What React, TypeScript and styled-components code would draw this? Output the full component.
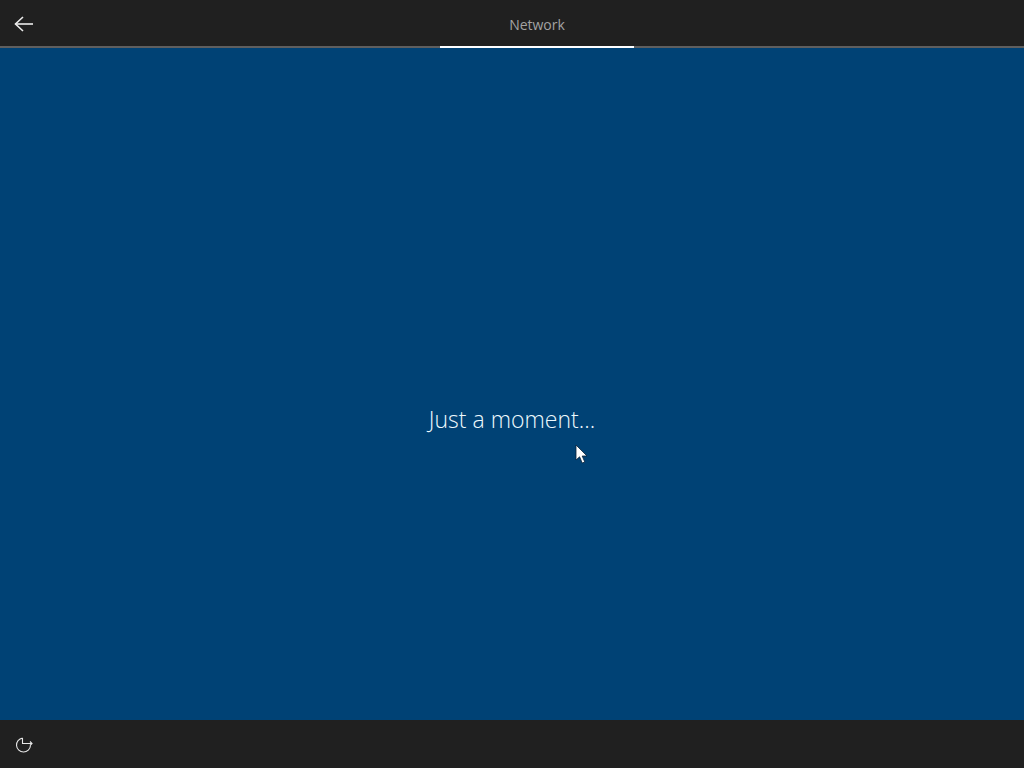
import styled, { createGlobalStyle } from "styled-components";

const GlobalStyle = createGlobalStyle`
  html, body {
    margin: 0;
    height: 100%;
    background: #004275;
  }
  #root {
    height: 100%;
  }
`;

const Screen = styled.div`
  display: flex;
  flex-direction: column;
  font-family: "Open Sans", "Noto Sans", sans-serif;
  height: 768px;
  overflow: hidden;
  width: 1024px;
`;

const TopBar = styled.header`
  background: #202020;
  border-bottom: 2px solid #5f5f5f;
  box-sizing: border-box;
  display: grid;
  flex-shrink: 0;
  grid-template-columns: 440px 194px 1fr;
  height: 48px;
`;

const BackButton = styled.button`
  align-items: center;
  align-self: stretch;
  background: none;
  border: 0;
  display: flex;
  justify-self: start;
  padding: 0 0 0 14px;
`;

const Tab = styled.div`
  align-items: center;
  border-bottom: 2px solid #ffffff;
  box-sizing: border-box;
  color: #a3a3a3;
  display: flex;
  font-size: 14px;
  height: 48px;
  justify-content: center;
  padding-top: 2px;
`;

const Main = styled.main`
  align-items: center;
  background: #004275;
  display: flex;
  flex: 1;
  justify-content: center;
  padding-top: 70px;
  position: relative;
`;

const Message = styled.div`
  color: #eef9fd;
  font-size: 23px;
  font-weight: 300;
`;

const Cursor = styled.svg`
  left: 575px;
  position: absolute;
  top: 396px;
`;

const BottomBar = styled.footer`
  align-items: center;
  background: #202020;
  display: flex;
  flex-shrink: 0;
  height: 48px;
  padding-left: 15px;
`;

const RestartIcon = styled.svg`
  margin-top: 2px;
`;

export default function App() {
  return (
    <Screen>
      <GlobalStyle />
      <TopBar>
        <BackButton aria-label="Back">
          <svg width="20" height="16" viewBox="0 0 20 16" fill="none" stroke="#ececec" strokeWidth="1.6">
            <path d="M1.5 8H19" />
            <path d="M9 1L1.5 8L9 15" />
          </svg>
        </BackButton>
        <Tab>Network</Tab>
      </TopBar>
      <Main>
        <Message>Just a moment...</Message>
        <Cursor width="13" height="21" viewBox="0 0 13 21">
          <path d="M1 1V16L4.6 12.8L7.2 19L9.8 18L7.2 12H12Z" fill="#ffffff" stroke="#0a2238" strokeWidth="0.8" />
        </Cursor>
      </Main>
      <BottomBar>
        <RestartIcon width="18" height="16" viewBox="0 0 18 16" fill="none" stroke="#e6e6e6" strokeWidth="1.1">
          <path d="M7.5 1.1A7 7 0 1 0 15.5 8.5" />
          <path d="M7.5 1.1V6.5H17" />
          <path d="M15 4.5L17 6.5L15 8.5" />
        </RestartIcon>
      </BottomBar>
    </Screen>
  );
}
